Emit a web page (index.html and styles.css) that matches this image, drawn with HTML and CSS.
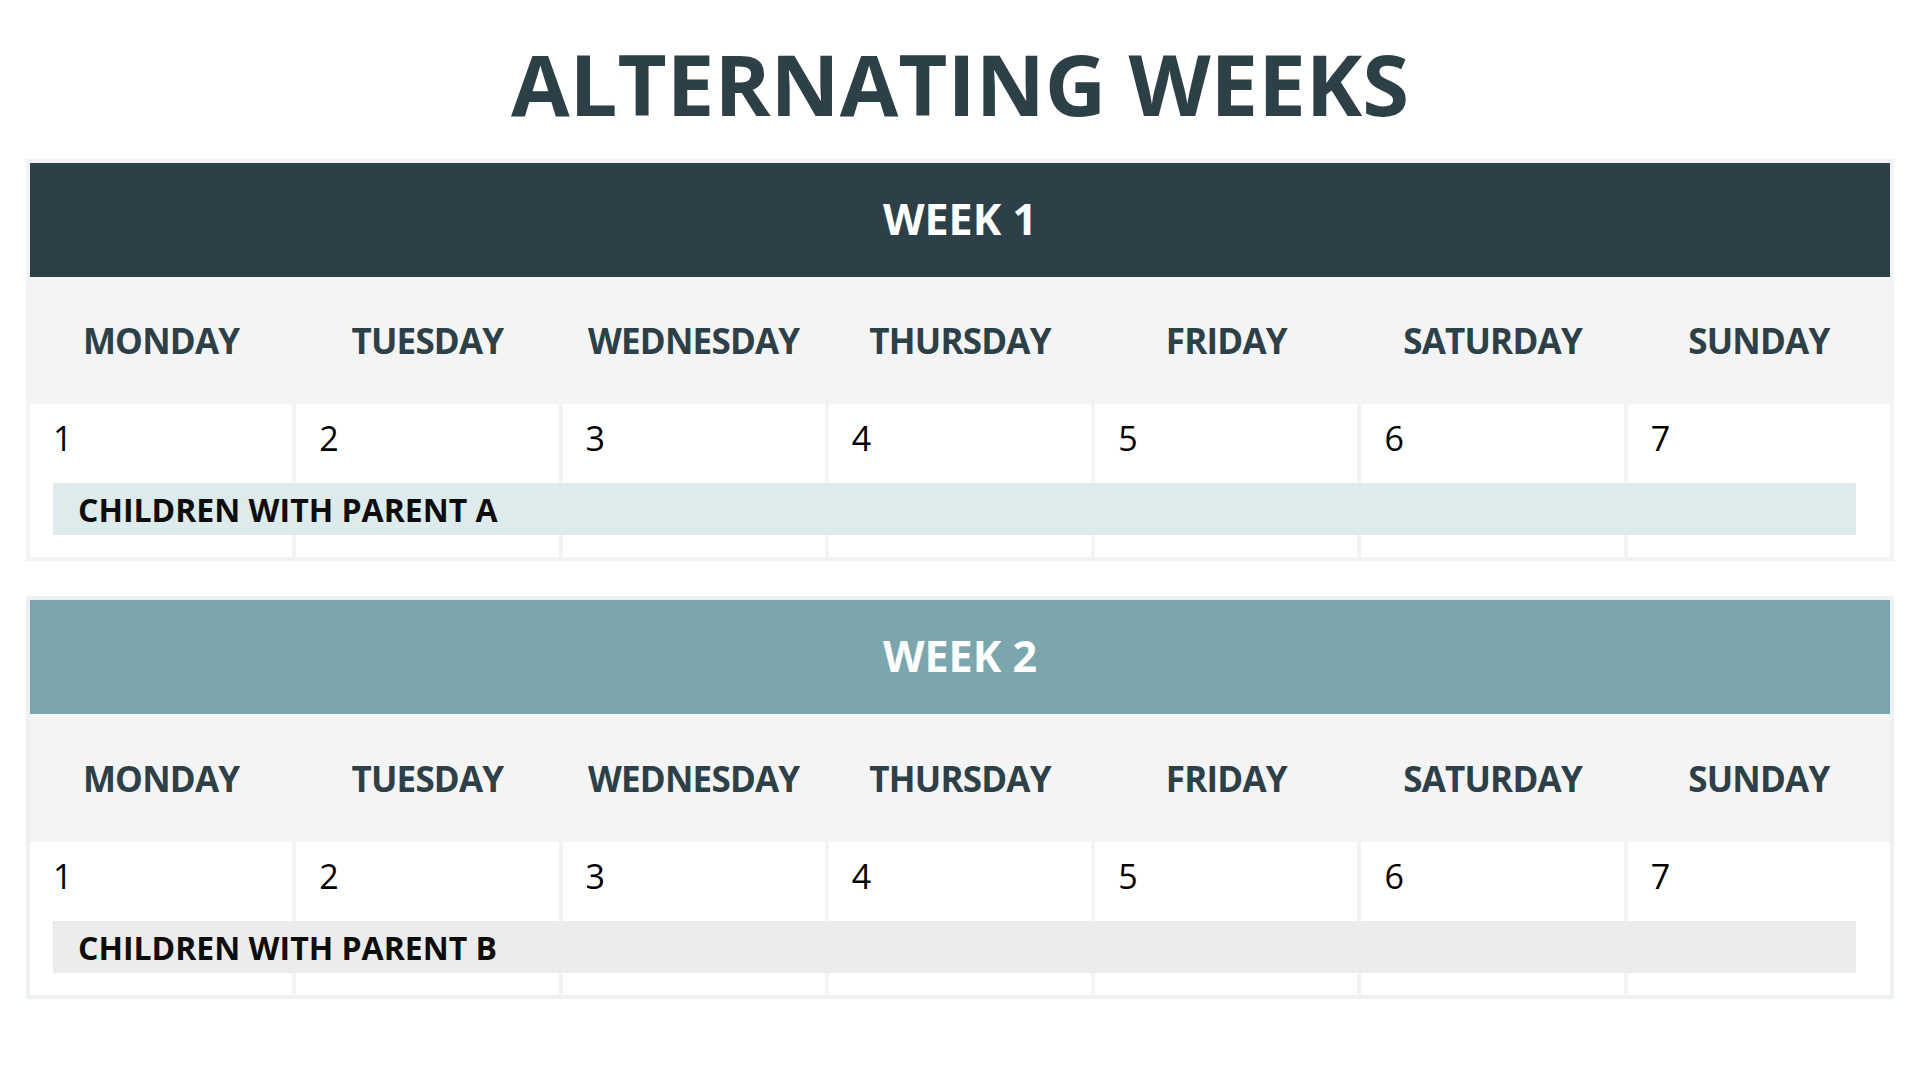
FILE: index.html
```html
<!DOCTYPE html>
<html lang="en">
<head>
<meta charset="utf-8">
<title>Alternating Weeks</title>
<link rel="stylesheet" href="styles.css">
</head>
<body>
<main class="page">
  <h1 class="title">ALTERNATING WEEKS</h1>

  <section class="week week-a">
    <header class="week-head">WEEK 1</header>
    <div class="days">
      <div class="day">MONDAY</div>
      <div class="day">TUESDAY</div>
      <div class="day">WEDNESDAY</div>
      <div class="day">THURSDAY</div>
      <div class="day">FRIDAY</div>
      <div class="day">SATURDAY</div>
      <div class="day">SUNDAY</div>
    </div>
    <div class="cells">
      <div class="cell c1">1</div>
      <div class="cell c2">2</div>
      <div class="cell c3">3</div>
      <div class="cell c4">4</div>
      <div class="cell c5">5</div>
      <div class="cell c6">6</div>
      <div class="cell c7">7</div>
      <div class="bar">CHILDREN WITH PARENT A</div>
    </div>
  </section>

  <section class="week week-b">
    <header class="week-head">WEEK 2</header>
    <div class="days">
      <div class="day">MONDAY</div>
      <div class="day">TUESDAY</div>
      <div class="day">WEDNESDAY</div>
      <div class="day">THURSDAY</div>
      <div class="day">FRIDAY</div>
      <div class="day">SATURDAY</div>
      <div class="day">SUNDAY</div>
    </div>
    <div class="cells">
      <div class="cell c1">1</div>
      <div class="cell c2">2</div>
      <div class="cell c3">3</div>
      <div class="cell c4">4</div>
      <div class="cell c5">5</div>
      <div class="cell c6">6</div>
      <div class="cell c7">7</div>
      <div class="bar">CHILDREN WITH PARENT B</div>
    </div>
  </section>
</main>
</body>
</html>
```
FILE: styles.css
```css
* { box-sizing: border-box; }

html, body {
  margin: 0;
  padding: 0;
  background: #ffffff;
}

body {
  font-family: "Open Sans", "Noto Sans", "Liberation Sans", sans-serif;
  color: #2e4047;
}

.page {
  width: 1920px;
  padding: 41px 26px 0 26px;
  display: flex;
  flex-direction: column;
  gap: 35px;
}

.title {
  margin: 0 0 -2px 0;
  font-size: 85px;
  line-height: 1;
  font-weight: 700;
  text-align: center;
  color: #2e4047;
  letter-spacing: 0;
}

.week {
  width: 1868px;
  padding: 4px;
  background: #f3f3f3;
  display: flex;
  flex-direction: column;
}

.week-b {
  background: #eef1f2;
}

.week-head {
  height: 114px;
  display: flex;
  align-items: center;
  justify-content: center;
  font-size: 43px;
  font-weight: 700;
  color: #ffffff;
  padding-bottom: 3px;
}

.week-a .week-head { background: #2e4047; }
.week-b .week-head { background: #7ca6ad; }

.days {
  height: 127px;
  display: grid;
  grid-template-columns: repeat(7, 1fr);
  column-gap: 4px;
  background: #f4f4f4;
}

.week-b .days { height: 128px; }

.day {
  display: flex;
  align-items: center;
  justify-content: center;
  font-size: 35px;
  font-weight: 700;
  letter-spacing: -0.8px;
  color: #2e4047;
}

.cells {
  display: grid;
  grid-template-columns: repeat(7, 1fr);
  grid-template-rows: 79px 52px 22px;
  column-gap: 4px;
  background: #f3f3f3;
}

.cell {
  grid-row: 1 / 4;
  background: #ffffff;
  padding: 17px 0 0 23px;
  font-size: 34px;
  line-height: 1;
  font-weight: 400;
  color: #000000;
}

.c1 { grid-column: 1; }
.c2 { grid-column: 2; }
.c3 { grid-column: 3; }
.c4 { grid-column: 4; }
.c5 { grid-column: 5; }
.c6 { grid-column: 6; }
.c7 { grid-column: 7; }

.bar {
  grid-row: 2;
  grid-column: 1 / -1;
  margin: 0 34px 0 23px;
  z-index: 1;
  display: flex;
  align-items: center;
  padding-left: 25px;
  font-size: 32px;
  font-weight: 700;
  color: #0d0d0d;
}

.week-a .bar { background: #deebec; }
.week-b .bar { background: #ececec; }
```
